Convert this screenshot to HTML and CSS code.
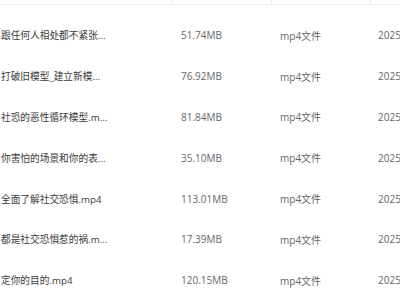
FILE: index.html
```html
<!DOCTYPE html>
<html lang="zh-CN">
<head>
<meta charset="utf-8">
<link rel="stylesheet" href="styles.css">
</head>
<body>
<div class="table">
  <div class="head">
    <div class="hcell"></div>
    <div class="hcell sep"></div>
    <div class="hcell sep"></div>
    <div class="hcell sep"></div>
  </div>
  <div class="rows">
    <div class="row"><div class="name">跟任何人相处都不紧张...</div><div class="size">51.74MB</div><div class="type">mp4文件</div><div class="date">2025</div></div>
    <div class="row"><div class="name">打破旧模型_建立新模...</div><div class="size">76.92MB</div><div class="type">mp4文件</div><div class="date">2025</div></div>
    <div class="row"><div class="name">社恐的恶性循环模型.m...</div><div class="size">81.84MB</div><div class="type">mp4文件</div><div class="date">2025</div></div>
    <div class="row"><div class="name">你害怕的场景和你的表...</div><div class="size">35.10MB</div><div class="type">mp4文件</div><div class="date">2025</div></div>
    <div class="row"><div class="name">全面了解社交恐惧.mp4</div><div class="size">113.01MB</div><div class="type">mp4文件</div><div class="date">2025</div></div>
    <div class="row"><div class="name">都是社交恐惧惹的祸.m...</div><div class="size">17.39MB</div><div class="type">mp4文件</div><div class="date">2025</div></div>
    <div class="row"><div class="name">定你的目的.mp4</div><div class="size">120.15MB</div><div class="type">mp4文件</div><div class="date">2025</div></div>
  </div>
</div>
</body>
</html>
```
FILE: styles.css
```css
html, body {
  margin: 0;
  padding: 0;
  background: #ffffff;
  width: 400px;
  height: 300px;
  overflow: hidden;
}
.table {
  font-family: "Open Sans", "Noto Sans CJK SC", sans-serif;
  font-size: 10px;
  color: #666666;
}
.head {
  display: grid;
  grid-template-columns: 172px 99px 99px 1fr;
  height: 4px;
  border-bottom: 1px solid #f0f0f0;
}
.hcell.sep {
  border-left: 1px solid #ebebeb;
}
.rows {
  padding-top: 10px;
}
.row {
  display: grid;
  grid-template-columns: 172px 99px 99px 1fr;
  height: 40.8px;
  align-items: center;
  white-space: nowrap;
}
.name {
  padding-left: 1px;
  color: #3a3a3a;
  font-size: 9.7px;
}
.size, .type {
  padding-left: 9px;
}
.date {
  padding-left: 8px;
}
```
